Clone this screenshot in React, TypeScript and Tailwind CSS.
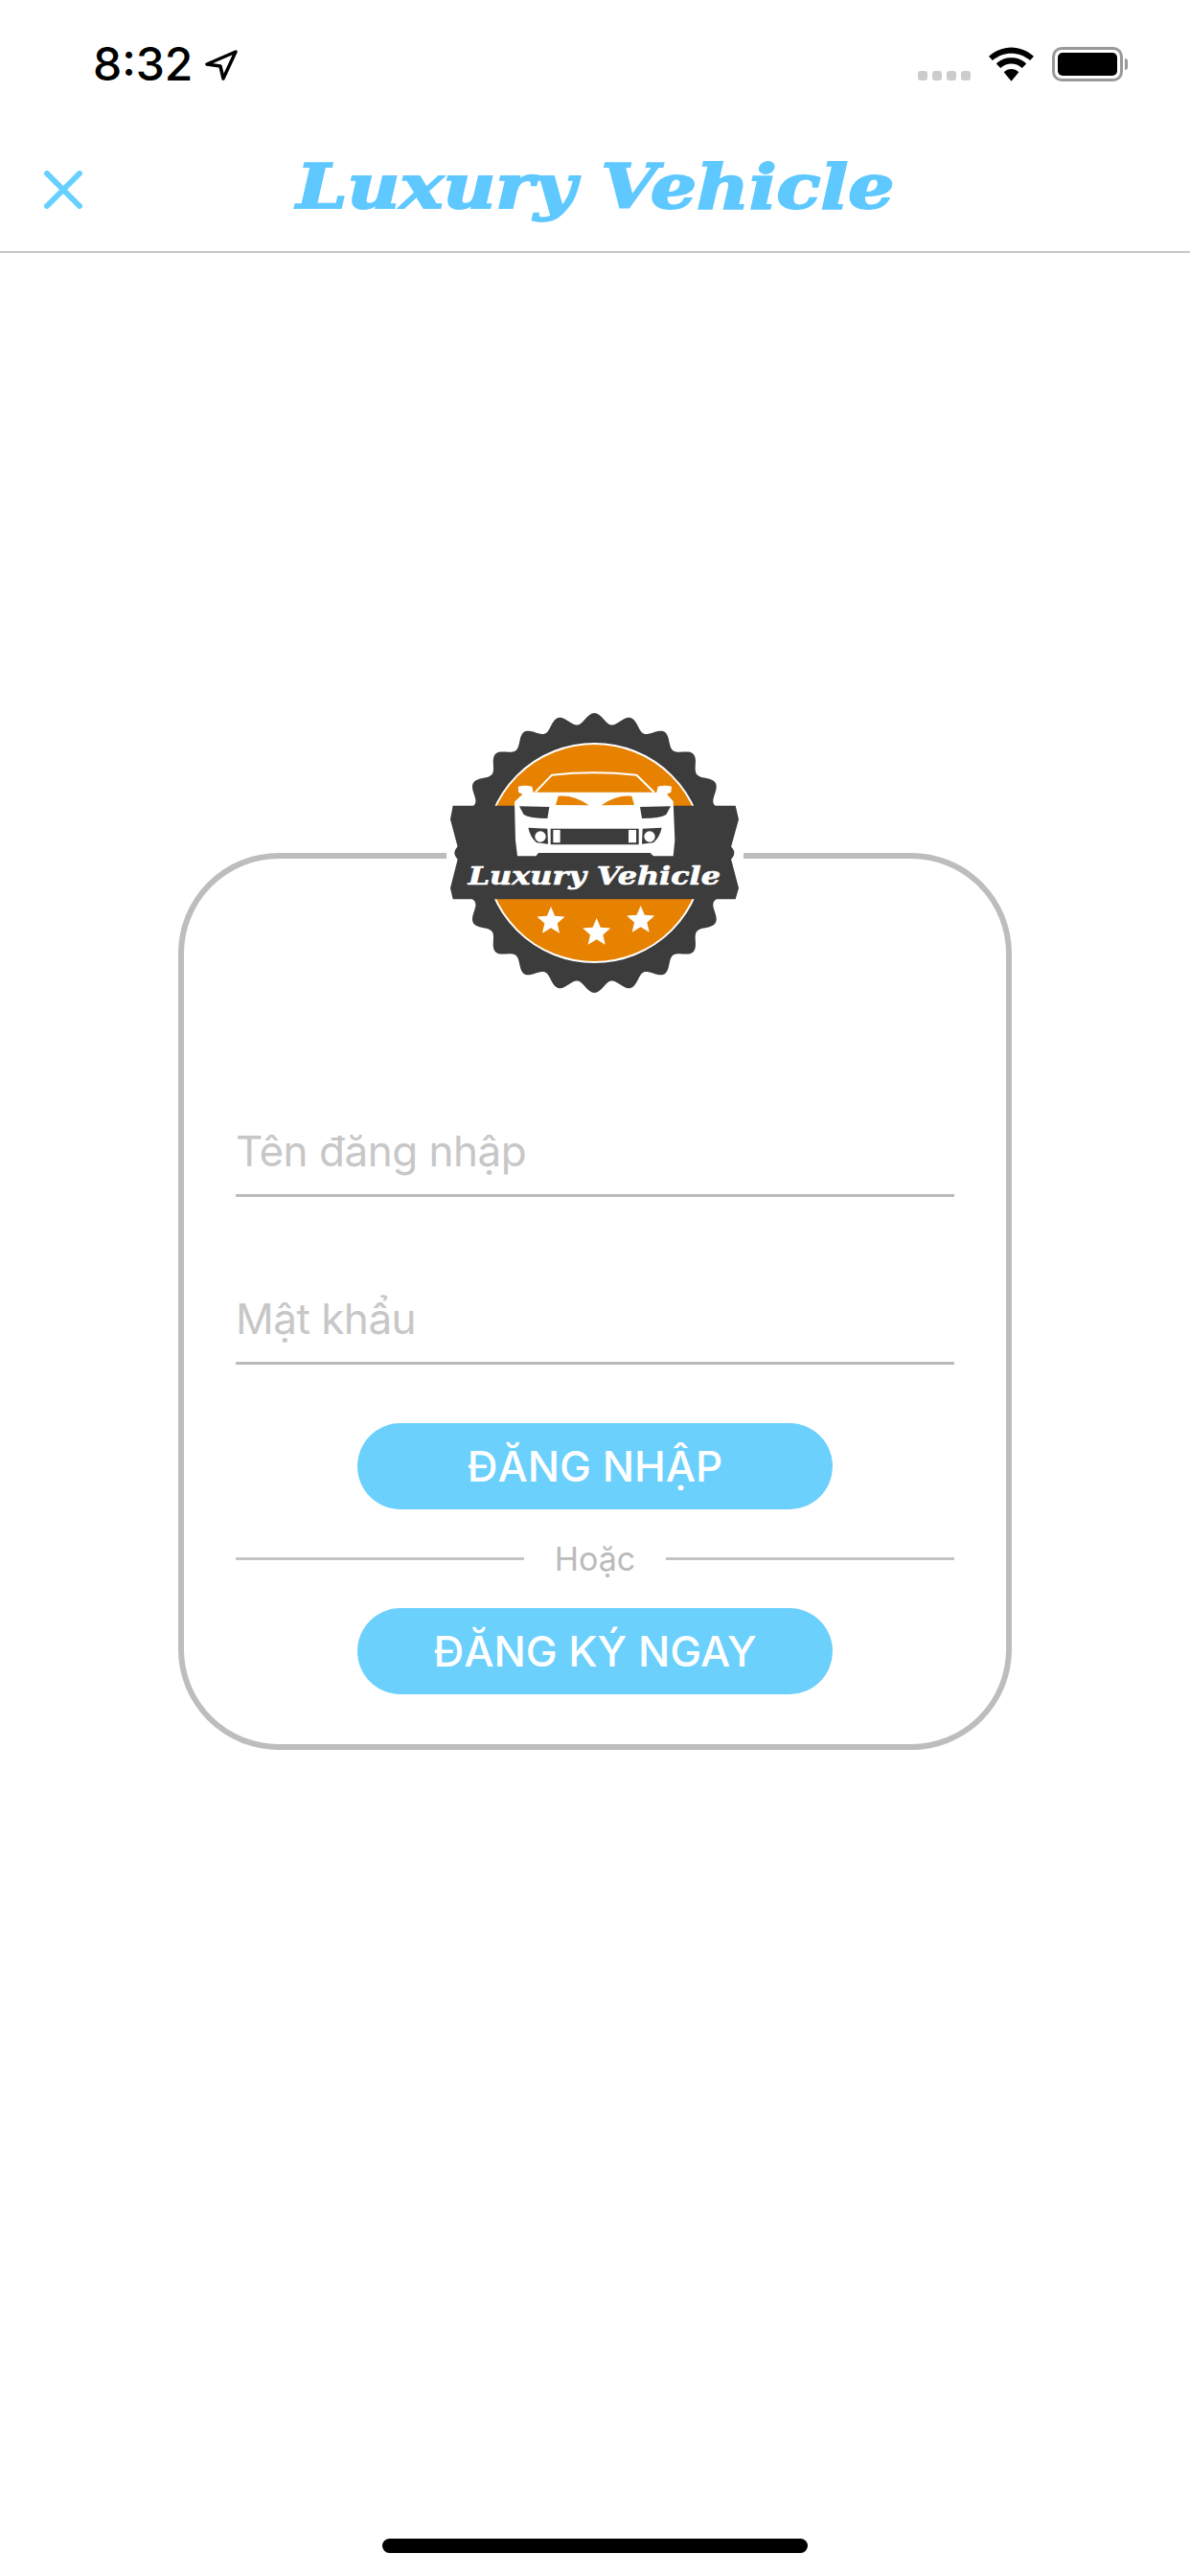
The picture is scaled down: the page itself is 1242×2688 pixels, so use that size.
import React from "react";

const sans = "font-['Inter','Noto_Sans',sans-serif]";

// scalloped edge of the badge, sampled round the centre
const gearPath = () => {
  const pts: string[] = [];
  for (let i = 0; i < 720; i++) {
    const a = (i / 720) * Math.PI * 2;
    const r = 421 + 17 * Math.cos(a * 24);
    pts.push(`${(543 + r * Math.sin(a)).toFixed(1)},${(480 - r * Math.cos(a)).toFixed(1)}`);
  }
  return "M" + pts.join("L") + "Z";
};

const Star = ({ x, y }: { x: number; y: number }) => {
  const pts: string[] = [];
  for (let i = 0; i < 10; i++) {
    const a = (i / 10) * Math.PI * 2;
    const r = i % 2 === 0 ? 46 : 21;
    pts.push(`${(x + r * Math.sin(a)).toFixed(1)},${(y - r * Math.cos(a)).toFixed(1)}`);
  }
  return <polygon points={pts.join(" ")} fill="#fff" />;
};

const Logo = () => (
  <svg viewBox="80 30 930 900" className="w-[310px] h-[300px]">
    <path d={gearPath()} fill="#3c3c3c" />
    <circle cx="543" cy="480" r="342" fill="#e68200" stroke="#fff" strokeWidth="6" />
    <path d="M100 332H985L995 375L966 480L995 590L985 625H100L92 590L120 480L92 375Z" fill="#3c3c3c" />
    {/* car */}
    <path
      d="M358 290L410 236Q540 222 675 236L730 290"
      fill="none"
      stroke="#fff"
      strokeWidth="6"
    />
    <path
      d="M305 272Q325 266 348 272L352 290H738L742 272Q765 266 785 272L783 290L770 296L790 318L795 440L790 490H728L718 480H368L360 490H302L296 440L293 320L318 296L305 290Z"
      fill="#fff"
    />
    <path d="M422 330L430 302Q480 298 526 331Z" fill="#e68200" />
    <path d="M565 331Q610 298 660 302L668 330Z" fill="#e68200" />
    <path d="M308 334L402 336L396 372Q340 372 322 360Z" fill="#3c3c3c" />
    <path d="M782 334L686 336L692 372Q750 372 768 360Z" fill="#3c3c3c" />
    <path d="M336 401L396 404L398 452L362 448Q342 430 336 401Z" fill="#3c3c3c" />
    <path d="M754 401L694 404L692 452L728 448Q748 430 754 401Z" fill="#3c3c3c" />
    <circle cx="374" cy="429" r="17" fill="#fff" />
    <circle cx="716" cy="429" r="17" fill="#fff" />
    <path d="M406 404H682V454H406Z" fill="#3c3c3c" />
    <path d="M414 408H436V448H414Z M650 408H674V448H650Z" fill="#fff" />
    <text
      x="543"
      y="580"
      textAnchor="middle"
      fill="#fff"
      stroke="#fff"
      strokeWidth="2"
      fontFamily="'DejaVu Serif', serif"
      fontWeight="700"
      fontStyle="italic"
      fontSize="76"
      textLength="790"
      lengthAdjust="spacingAndGlyphs"
    >
      Luxury Vehicle
    </text>
    <Star x={407} y={694} />
    <Star x={550} y={730} />
    <Star x={688} y={691} />
  </svg>
);

const Field = ({ placeholder }: { placeholder: string }) => (
  <input
    placeholder={placeholder}
    className={`${sans} w-full h-[80px] pb-[14px] text-[44px] tracking-[-0.5px] border-b-[3px] border-[#bbbbbb] bg-transparent outline-none placeholder:text-[#c7c7c7]`}
  />
);

const PillButton = ({ children }: { children: React.ReactNode }) => (
  <button className={`${sans} w-[496px] h-[90px] rounded-full bg-[#6bd0fc] text-white text-[44px] font-medium`}>
    {children}
  </button>
);

export default function App() {
  return (
    <div className="w-[1242px] h-[2688px] bg-white flex flex-col relative overflow-hidden">
      {/* status bar */}
      <div className="h-[132px] flex items-start justify-between pl-[97px] pr-[65px] pt-[40px]">
        <div className="flex items-center gap-[13px]">
          <span className={`${sans} text-[48px] leading-[54px] font-medium text-black`}>8:32</span>
          <svg viewBox="0 0 34 32" className="w-[34px] h-[32px] mt-[2px]" fill="none" stroke="#000" strokeWidth="3.500" strokeLinejoin="round">
            <path d="M32 2L2 15L16 17L19 30Z" />
          </svg>
        </div>
        <div className="flex items-end gap-[19px] pt-[9px]">
          <div className="flex gap-[5px] pb-[1px]">
            <div className="w-[10px] h-[10px] rounded-[3px] bg-[#cccccc]" />
            <div className="w-[10px] h-[10px] rounded-[3px] bg-[#cccccc]" />
            <div className="w-[10px] h-[10px] rounded-[3px] bg-[#cccccc]" />
            <div className="w-[10px] h-[10px] rounded-[3px] bg-[#cccccc]" />
          </div>
          <svg viewBox="0 0 48 36" className="w-[47px] h-[36px]" fill="#000">
            <path d="M24 0C15 0 7 3.500 0 9.500L4 14C10 9 17 6.500 24 6.500C31 6.500 38 9 44 14L48 9.500C41 3.500 33 0 24 0Z" />
            <path d="M24 11C18 11 12 13 8 17.500L12.500 22C16 19 20 17.500 24 17.500C28 17.500 32 19 35.500 22L40 17.500C36 13 30 11 24 11Z" />
            <path d="M24 23C21 23 19 24 16 26.500L24 36L32 26.500C29 24 27 23 24 23Z" />
          </svg>
          <div className="flex items-center gap-[2px]">
            <div className="w-[74px] h-[36px] rounded-[10px] border-[3px] border-[#999999] p-[3px]">
              <div className="w-full h-full rounded-[5px] bg-black" />
            </div>
            <div className="w-[3px] h-[12px] rounded-r-full bg-[#999999]" />
          </div>
        </div>
      </div>

      {/* nav */}
      <div className="h-[132px] border-b-2 border-[#c8c8c8] flex items-center justify-center relative">
        <svg viewBox="0 0 40 40" className="absolute left-[46px] top-[46px] w-[40px] h-[40px]" stroke="#66d0ff" strokeWidth="6" strokeLinecap="round">
          <path d="M3 3L37 37M37 3L3 37" />
        </svg>
        <span className="font-['DejaVu_Serif',serif] font-bold italic text-[64px] leading-none text-[#5ec8ff] [-webkit-text-stroke:2px_#5ec8ff] inline-block scale-x-[1.18] pb-[4px]">
          Luxury Vehicle
        </span>
      </div>

      {/* card */}
      <div className="flex justify-center pt-[626px]">
        <div className="relative w-[870px] h-[936px] rounded-[105px] border-[6px] border-[#bdbdbd] px-[54px] pt-[273px] flex flex-col items-center">
          <div className="absolute left-[274px] top-[-156px] w-[310px] h-[300px] bg-white flex items-center justify-center">
            <Logo />
          </div>
          <Field placeholder="Tên đăng nhập" />
          <div className="h-[95px] shrink-0" />
          <Field placeholder="Mật khẩu" />
          <div className="mt-[61px]">
            <PillButton>ĐĂNG NHẬP</PillButton>
          </div>
          <div className="w-full flex items-center justify-between mt-[13px] mb-[14px] h-[76px]">
            <div className="w-[301px] h-[3px] bg-[#c4c4c4]" />
            <span className={`${sans} text-[34px] text-[#bbbbbb]`}>Hoặc</span>
            <div className="w-[301px] h-[3px] bg-[#c4c4c4]" />
          </div>
          <PillButton>ĐĂNG KÝ NGAY</PillButton>
        </div>
      </div>

      {/* home indicator */}
      <div className="absolute left-[399px] bottom-[24px] w-[444px] h-[15px] rounded-full bg-black" />
    </div>
  );
}
